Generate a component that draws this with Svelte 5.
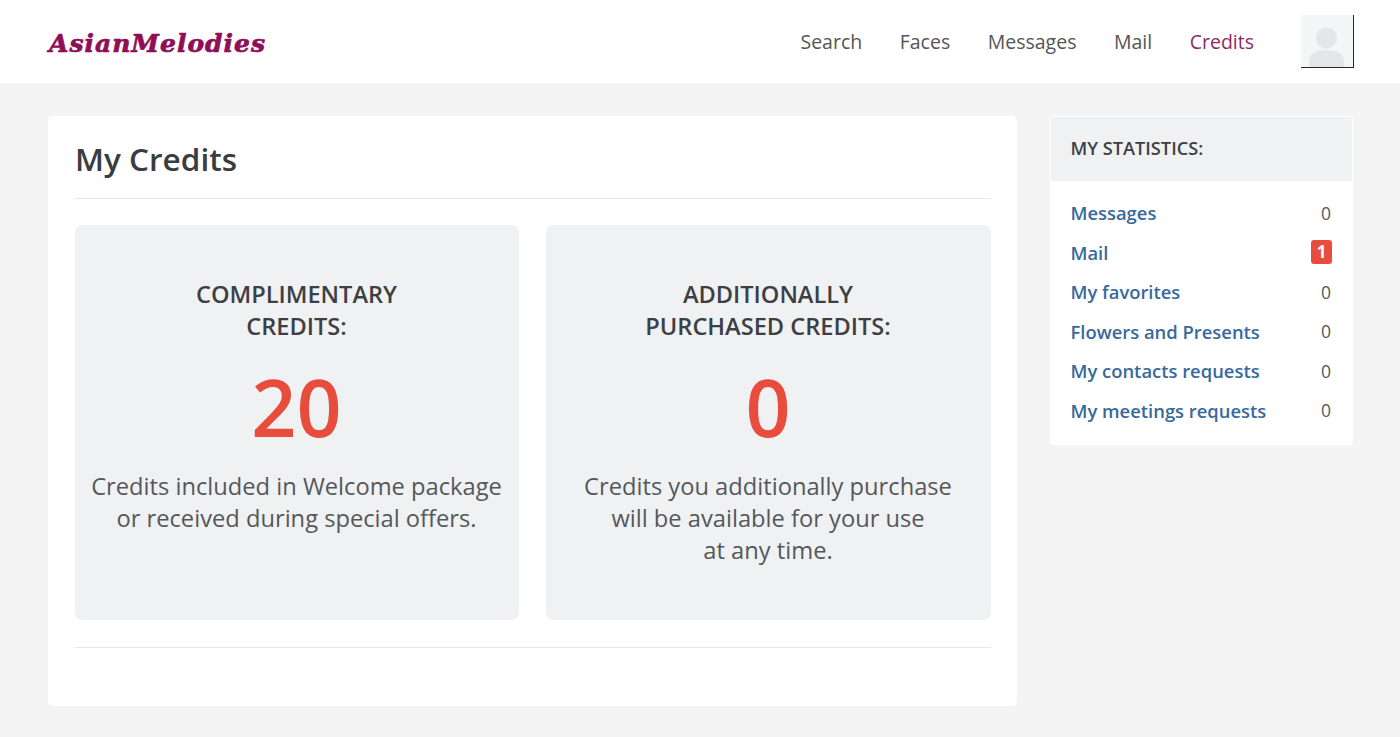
<script>
  const nav = ['Search', 'Faces', 'Messages', 'Mail', 'Credits'];
  const stats = [
    ['Messages', 0],
    ['Mail', 1],
    ['My favorites', 0],
    ['Flowers and Presents', 0],
    ['My contacts requests', 0],
    ['My meetings requests', 0]
  ];
</script>

<header class="top">
  <a class="logo" href="#/">AsianMelodies</a>
  <nav class="nav">
    {#each nav as item}
      <a href="#/" class:active={item === 'Credits'}>{item}</a>
    {/each}
    <div class="avatar">
      <svg viewBox="0 0 52 52" width="52" height="52" aria-hidden="true">
        <rect width="52" height="52" fill="#f4f5f6" />
        <circle cx="25.5" cy="23" r="10.5" fill="#e4e7ea" />
        <path d="M8 52 V47 C8 38 16 35 25.5 35 C35 35 43 38 43 47 V52 Z" fill="#e4e7ea" />
      </svg>
    </div>
  </nav>
</header>

<main class="page">
  <section class="panel">
    <h1>My Credits</h1>
    <div class="boxes">
      <article class="box">
        <h2>COMPLIMENTARY<br />CREDITS:</h2>
        <div class="num">20</div>
        <p>Credits included in Welcome package<br />or received during special offers.</p>
      </article>
      <article class="box">
        <h2>ADDITIONALLY<br />PURCHASED CREDITS:</h2>
        <div class="num">0</div>
        <p>Credits you additionally purchase<br />will be available for your use<br />at any time.</p>
      </article>
    </div>
  </section>

  <aside class="side">
    <h3>MY STATISTICS:</h3>
    <ul>
      {#each stats as [label, n]}
        <li>
          <a href="#/">{label}</a>
          {#if n > 0}<span class="badge">{n}</span>{:else}<span class="zero">{n}</span>{/if}
        </li>
      {/each}
    </ul>
  </aside>
</main>

<style>
  :global(body) {
    margin: 0;
    background: #f4f4f5;
    font-family: "Open Sans", "Noto Sans", sans-serif;
    color: #3d4043;
  }
  a { text-decoration: none; }

  .top {
    height: 83px;
    background: #fff;
    display: flex;
    align-items: center;
    justify-content: space-between;
    padding: 0 46px 0 49px;
  }
  .logo {
    font-family: "DejaVu Serif", serif;
    font-style: italic;
    font-weight: 700;
    font-size: 25px;
    line-height: 34px;
    margin-top: 4px;
    letter-spacing: 1px;
    color: #8f0f57;
    -webkit-text-stroke: 0.7px #8f0f57;
  }
  .nav {
    display: flex;
    align-items: center;
    font-size: 19.5px;
  }
  .nav a {
    color: #555;
    margin-right: 37.5px;
  }
  .nav a.active { color: #8e2a62; margin-right: 47px; }
  .avatar {
    width: 52px;
    height: 52px;
    border-right: 1px solid #23262a;
    border-bottom: 1px solid #23262a;
    overflow: hidden;
  }
  .avatar svg { display: block; }

  .page {
    display: flex;
    align-items: flex-start;
    gap: 33px;
    padding: 33px 47px 30px 48px;
  }
  .panel {
    width: 969px;
    box-sizing: border-box;
    height: 590px;
    background: #fff;
    border-radius: 5px;
    padding: 0 26px 0 27px;
  }
  h1 {
    margin: 0;
    height: 83px;
    box-sizing: border-box;
    border-bottom: 1px solid #e5e7e9;
    font-size: 31.5px;
    font-weight: 600;
    line-height: 86px;
    color: #3a3d40;
  }
  .boxes {
    display: grid;
    grid-template-columns: 444px 445px;
    gap: 27px;
    padding: 26px 0 27px;
    border-bottom: 1px solid #e5e7e9;
  }
  .box {
    height: 395px;
    box-sizing: border-box;
    background: #f0f1f3;
    border-radius: 7px;
    padding: 53px 1px 0 0;
    text-align: center;
  }
  h2 {
    margin: 0;
    font-size: 23.6px;
    font-weight: 600;
    line-height: 32px;
    color: #3d4043;
  }
  .num {
    margin-top: 12px;
    font-size: 79px;
    font-weight: 600;
    line-height: 106px;
    color: #e84c3d;
  }
  .box p {
    margin: 10px 0 0;
    font-size: 23.7px;
    line-height: 32px;
    color: #55585b;
  }

  .side {
    width: 303px;
    box-sizing: border-box;
    background: #fff;
    border-radius: 4px;
    padding: 1px 1px 15px;
  }
  h3 {
    margin: 0;
    height: 64px;
    box-sizing: border-box;
    background: #f0f1f3;
    padding: 0 19.5px;
    font-size: 18.2px;
    font-weight: 600;
    line-height: 63px;
    color: #3d4043;
  }
  ul {
    list-style: none;
    margin: 0;
    padding: 12px 20px 0 19.5px;
  }
  li {
    display: flex;
    justify-content: space-between;
    align-items: center;
    height: 39.5px;
    font-size: 18.4px;
  }
  li a {
    color: #38699c;
    font-weight: 600;
  }
  .zero {
    color: #55585b;
    font-size: 17.5px;
    margin-right: 1px;
  }
  .badge {
    width: 21px;
    height: 24px;
    border-radius: 3px;
    background: #e84c3d;
    color: #fff;
    font-size: 17px;
    font-weight: 700;
    line-height: 24px;
    text-align: center;
  }
</style>
